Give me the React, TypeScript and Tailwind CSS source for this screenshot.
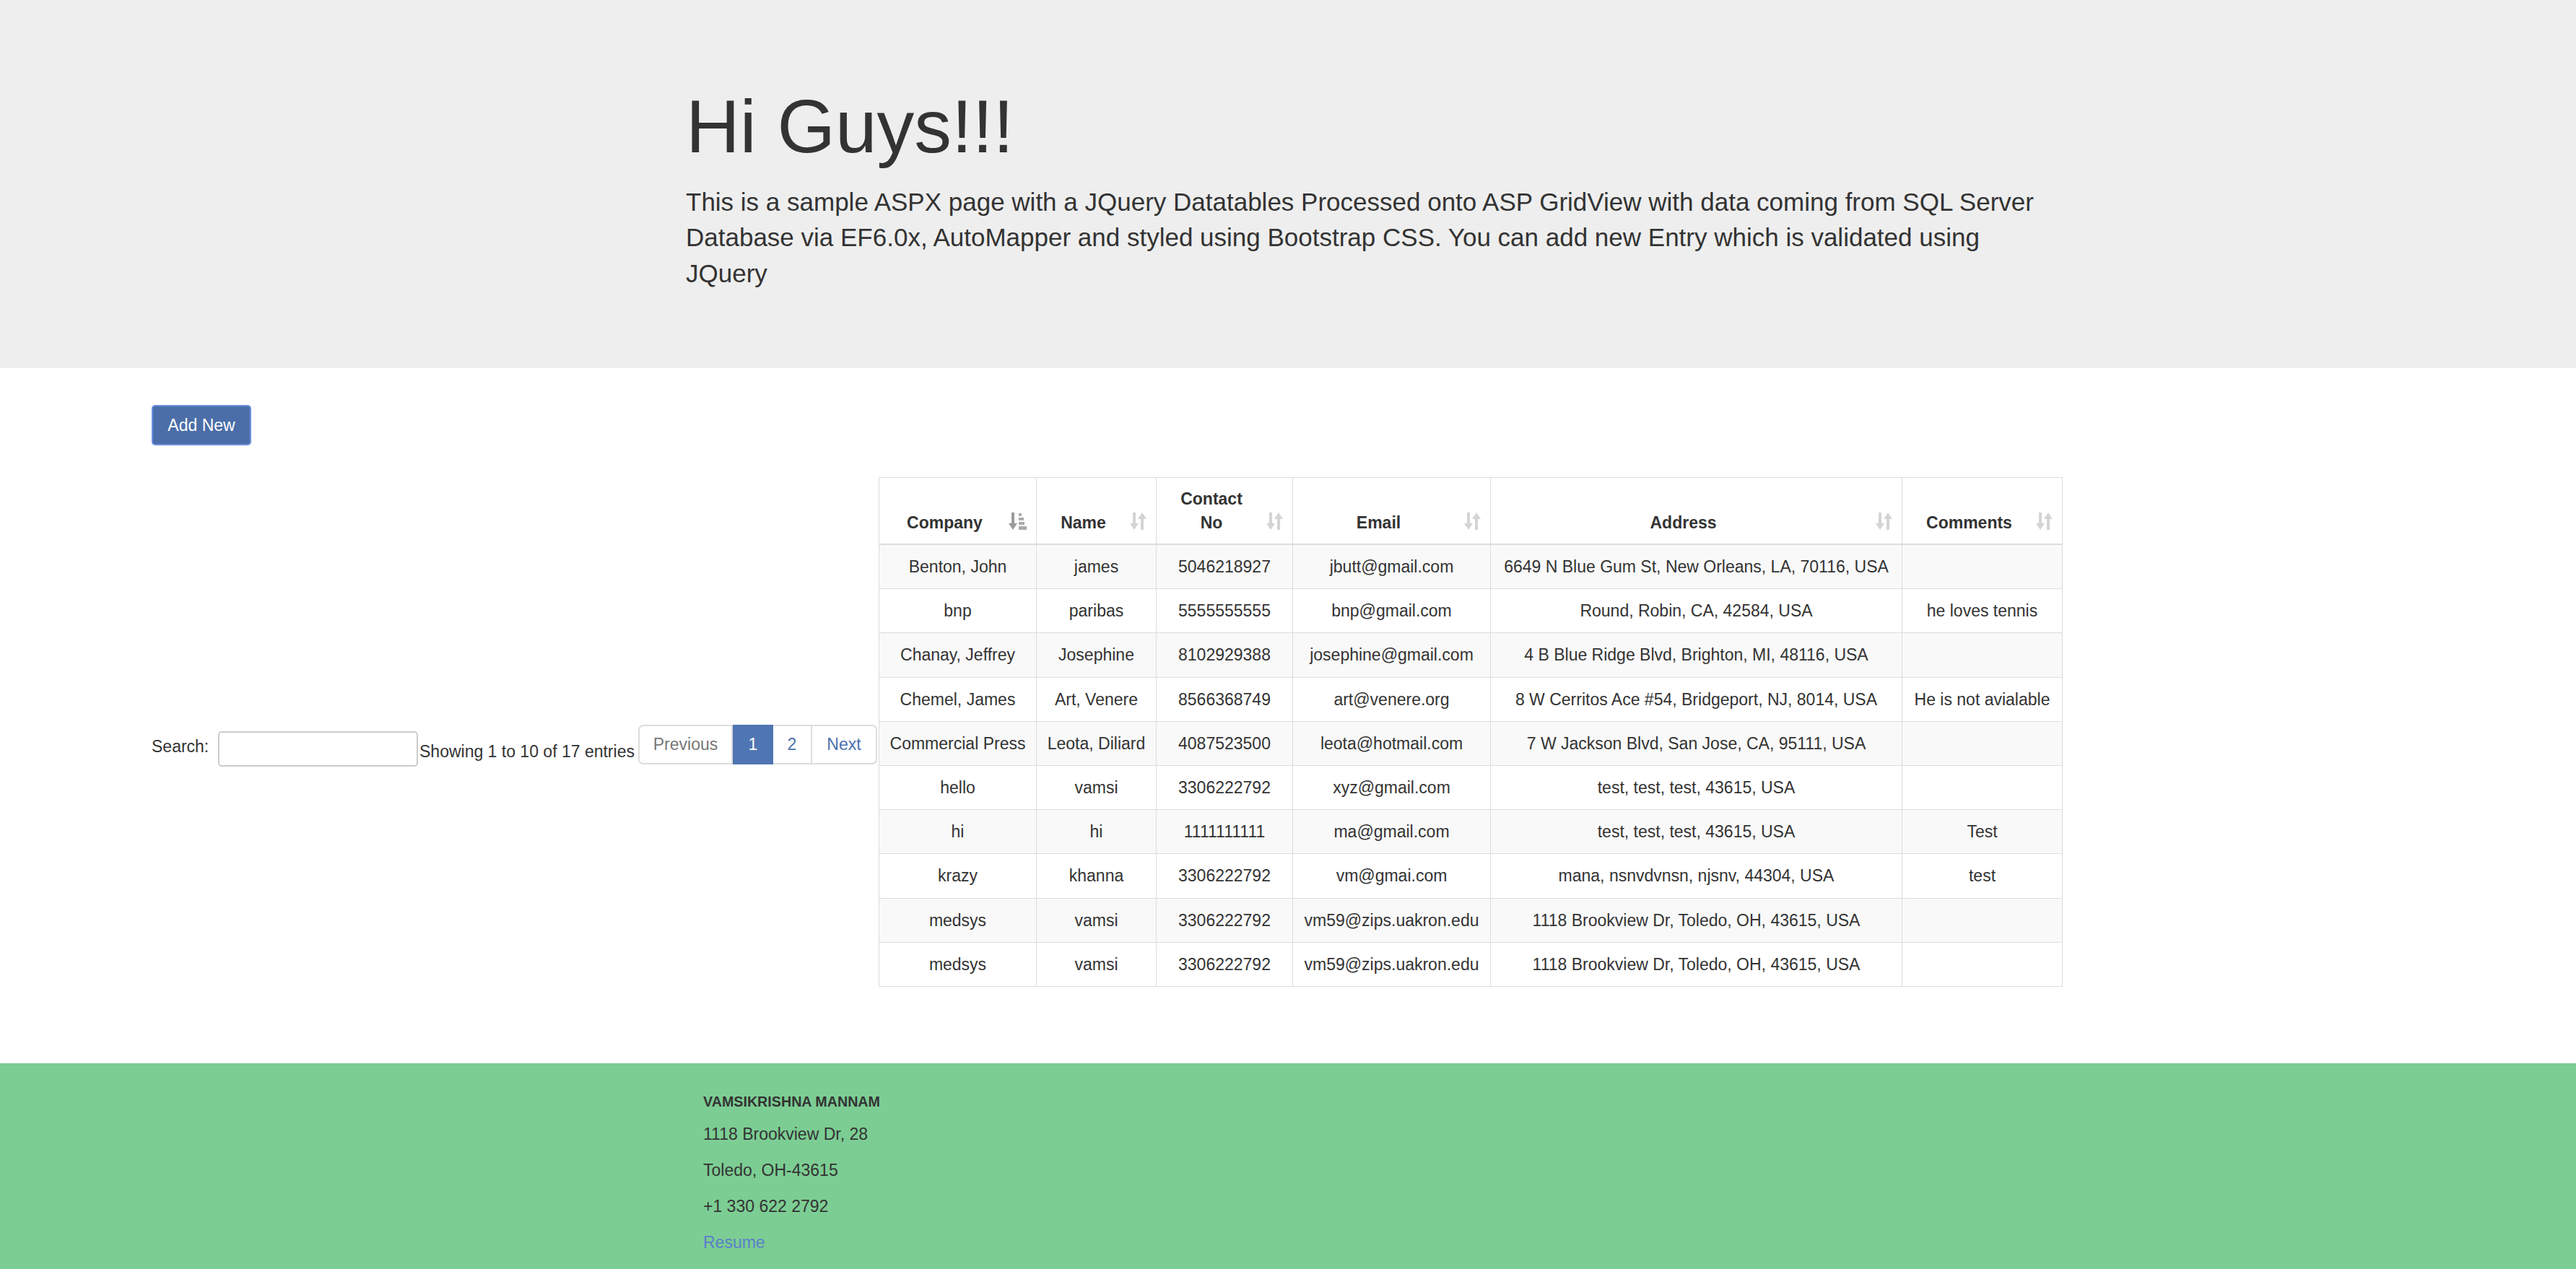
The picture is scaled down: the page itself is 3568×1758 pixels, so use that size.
import React from "react";

type Row = {
  company: string;
  name: string;
  contact: string;
  email: string;
  address: string;
  comments: string;
};

const rows: Row[] = [
  { company: "Benton, John", name: "james", contact: "5046218927", email: "jbutt@gmail.com", address: "6649 N Blue Gum St, New Orleans, LA, 70116, USA", comments: "" },
  { company: "bnp", name: "paribas", contact: "5555555555", email: "bnp@gmail.com", address: "Round, Robin, CA, 42584, USA", comments: "he loves tennis" },
  { company: "Chanay, Jeffrey", name: "Josephine", contact: "8102929388", email: "josephine@gmail.com", address: "4 B Blue Ridge Blvd, Brighton, MI, 48116, USA", comments: "" },
  { company: "Chemel, James", name: "Art, Venere", contact: "8566368749", email: "art@venere.org", address: "8 W Cerritos Ace #54, Bridgeport, NJ, 8014, USA", comments: "He is not avialable" },
  { company: "Commercial Press", name: "Leota, Diliard", contact: "4087523500", email: "leota@hotmail.com", address: "7 W Jackson Blvd, San Jose, CA, 95111, USA", comments: "" },
  { company: "hello", name: "vamsi", contact: "3306222792", email: "xyz@gmail.com", address: "test, test, test, 43615, USA", comments: "" },
  { company: "hi", name: "hi", contact: "1111111111", email: "ma@gmail.com", address: "test, test, test, 43615, USA", comments: "Test" },
  { company: "krazy", name: "khanna", contact: "3306222792", email: "vm@gmai.com", address: "mana, nsnvdvnsn, njsnv, 44304, USA", comments: "test" },
  { company: "medsys", name: "vamsi", contact: "3306222792", email: "vm59@zips.uakron.edu", address: "1118 Brookview Dr, Toledo, OH, 43615, USA", comments: "" },
  { company: "medsys", name: "vamsi", contact: "3306222792", email: "vm59@zips.uakron.edu", address: "1118 Brookview Dr, Toledo, OH, 43615, USA", comments: "" },
];

// plain up/down sort glyph
const SortBoth = () => (
  <svg width="23" height="24" viewBox="0 0 23 24" className="block">
    <g fill="#d4d4d4">
      <rect x="4" y="0" width="4" height="16" />
      <polygon points="0,15 12,15 6,24" />
      <polygon points="11,9 23,9 17,0" />
      <rect x="15" y="8" width="4" height="16" />
    </g>
  </svg>
);

// active ascending glyph (arrow + bars)
const SortAsc = () => (
  <svg width="25" height="24" viewBox="0 0 25 24" className="block">
    <g fill="#9a9a9a">
      <rect x="4" y="0" width="4" height="16" />
      <polygon points="0,15 12,15 6,24" />
    </g>
    <g fill="#ababab">
      <rect x="14" y="1" width="4" height="4" />
      <rect x="14" y="7" width="7" height="4" />
      <rect x="14" y="13" width="8" height="4" />
      <rect x="14" y="19" width="11" height="5" />
    </g>
  </svg>
);

const headers: { label: React.ReactNode; w: string; active?: boolean }[] = [
  { label: "Company", w: "w-[218px]", active: true },
  { label: "Name", w: "w-[166px]" },
  { label: <>Contact<br />No</>, w: "w-[189px]" },
  { label: "Email", w: "w-[274px]" },
  { label: "Address", w: "w-[570px]" },
  { label: "Comments", w: "w-[222px]" },
];

export default function App() {
  return (
    <div
      className="min-h-[1758px] bg-white text-[#333333]"
      style={{ fontFamily: '"Liberation Sans", Arial, sans-serif' }}
    >
      {/* Jumbotron */}
      <section className="bg-[#eeeeee] pl-[950px] pt-[118px] pb-[107px]">
        <h1 className="text-[103.5px] leading-[114px] font-normal">Hi Guys!!!</h1>
        <p className="mt-[23px] w-[1880px] text-[35px] leading-[49.3px]">
          This is a sample ASPX page with a JQuery Datatables Processed onto ASP GridView with data coming from SQL Server
          Database via EF6.0x, AutoMapper and styled using Bootstrap CSS. You can add new Entry which is validated using
          JQuery
        </p>
      </section>

      {/* Grid section */}
      <main className="pl-[210px] pt-[51px]">
        <button className="h-[56px] w-[138px] rounded-[5px] border-2 border-[#6c8fdf] bg-[#4b6ea8] text-[23px] text-white">
          Add New
        </button>

        <div className="mt-[44px] flex items-start">
          <div className="mt-[343px] flex items-start">
            <label className="mt-[14.5px] w-[92px] text-[23px] leading-[33px]">Search:</label>
            <input
              type="text"
              className="mt-[9px] h-[49px] w-[277px] rounded-[5px] border-2 border-[#cccccc] bg-white outline-none"
            />
            <div className="ml-[2px] mt-[21.5px] w-[303px] whitespace-nowrap text-[23px] leading-[33px]">
              Showing 1 to 10 of 17 entries
            </div>
            <ul className="flex h-[55px] text-[23px] leading-[33px]">
              <li className="flex w-[131px] items-center justify-center rounded-l-[7px] border-2 border-[#dddddd] bg-white text-[#777777]">
                Previous
              </li>
              <li className="flex w-[56px] items-center justify-center border-2 border-[#4f76b2] bg-[#4f76b2] text-white">
                1
              </li>
              <li className="flex w-[54px] items-center justify-center border-y-2 border-r-2 border-[#dddddd] bg-white text-[#4a72b0]">
                2
              </li>
              <li className="flex w-[90px] items-center justify-center rounded-r-[7px] border-y-2 border-r-2 border-[#dddddd] bg-white text-[#4a72b0]">
                Next
              </li>
            </ul>
          </div>

          <table className="ml-[2px] table-fixed border-collapse border border-[#dddddd] text-[23px]">
            <thead>
              <tr>
                {headers.map((h, i) => (
                  <th
                    key={i}
                    className={`${h.w} relative border border-b-2 border-[#dddddd] pt-[13px] pb-[12px] pl-[13px] pr-[49px] text-center align-bottom font-bold leading-[33px]`}
                  >
                    {h.label}
                    <span className="absolute right-[13px] bottom-[19px]">
                      {h.active ? <SortAsc /> : <SortBoth />}
                    </span>
                  </th>
                ))}
              </tr>
            </thead>
            <tbody>
              {rows.map((r, i) => (
                <tr key={i} className={i % 2 === 0 ? "bg-[#f9f9f9]" : "bg-white"}>
                  {[r.company, r.name, r.contact, r.email, r.address, r.comments].map((c, j) => (
                    <td
                      key={j}
                      className="border border-[#dddddd] px-[13px] py-[13px] text-center leading-[34.2px] whitespace-nowrap"
                    >
                      {c}
                    </td>
                  ))}
                </tr>
              ))}
            </tbody>
          </table>
        </div>
      </main>

      {/* Footer */}
      <footer className="mt-[106px] h-[285px] bg-[#7ccd93] pl-[974px] pt-[42px]">
        <div className="text-[19.7px] font-bold leading-[22px]">VAMSIKRISHNA MANNAM</div>
        <p className="mt-[18px] text-[23px] leading-[33px]">1118 Brookview Dr, 28</p>
        <p className="mt-[17px] text-[23px] leading-[33px]">Toledo, OH-43615</p>
        <p className="mt-[17px] text-[23px] leading-[33px]">+1 330 622 2792</p>
        <p className="mt-[17px] text-[23px] leading-[33px]">
          <a href="#" className="text-[#5b7ec9]">Resume</a>
        </p>
      </footer>
    </div>
  );
}
